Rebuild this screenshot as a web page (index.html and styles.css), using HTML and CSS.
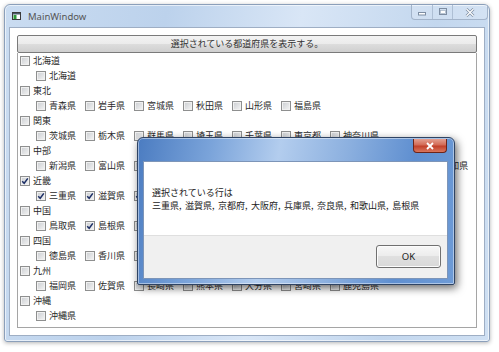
FILE: index.html
```html
<!DOCTYPE html>
<html lang="ja">

<head>
    <meta charset="UTF-8">
    <title>MainWindow</title>
    <link rel="stylesheet" href="styles.css">
</head>

<body>
    <div class="window">
        <div class="titlebar">
            <svg class="app-icon" width="9" height="8" viewBox="0 0 9 8">
                <rect x="0.5" y="0.5" width="8" height="7" fill="#fff" stroke="#3a3a3a" />
                <rect x="1" y="1" width="7" height="1.5" fill="#4a5a6a" />
                <rect x="1.5" y="3" width="3" height="4" fill="#2f9a3a" />
            </svg>
            <span class="title">MainWindow</span>
            <div class="caption">
                <span class="cap cap-min">
                    <svg width="10" height="8" viewBox="0 0 10 8"><rect x="1.5" y="4.5" width="7" height="2.5" fill="#fff" stroke="#7d8da2" /></svg>
                </span>
                <span class="cap cap-max">
                    <svg width="10" height="8" viewBox="0 0 10 8"><rect x="1.5" y="0.5" width="7" height="6" fill="none" stroke="#7d8da2" /><rect x="2.5" y="2.5" width="5" height="3" fill="#fff" stroke="#9aa8ba" stroke-width="0.6" /></svg>
                </span>
                <span class="cap cap-close">
                    <svg width="10" height="9" viewBox="0 0 10 9"><path d="M1.5 1 L8.5 8 M8.5 1 L1.5 8" stroke="#7d8da2" stroke-width="2.6" /><path d="M1.5 1 L8.5 8 M8.5 1 L1.5 8" stroke="#fff" stroke-width="1.2" /></svg>
                </span>
            </div>
        </div>

        <div class="client">
            <div class="show-button">選択されている都道府県を表示する。</div>

            <div class="tree">
                <div class="row"><span class="item"><span class="box"></span>北海道</span></div>
                <div class="row child"><span class="item"><span class="box"></span>北海道</span></div>

                <div class="row"><span class="item"><span class="box"></span>東北</span></div>
                <div class="row child">
                    <span class="item"><span class="box"></span>青森県</span>
                    <span class="item"><span class="box"></span>岩手県</span>
                    <span class="item"><span class="box"></span>宮城県</span>
                    <span class="item"><span class="box"></span>秋田県</span>
                    <span class="item"><span class="box"></span>山形県</span>
                    <span class="item"><span class="box"></span>福島県</span>
                </div>

                <div class="row"><span class="item"><span class="box"></span>関東</span></div>
                <div class="row child">
                    <span class="item"><span class="box"></span>茨城県</span>
                    <span class="item"><span class="box"></span>栃木県</span>
                    <span class="item"><span class="box"></span>群馬県</span>
                    <span class="item"><span class="box"></span>埼玉県</span>
                    <span class="item"><span class="box"></span>千葉県</span>
                    <span class="item"><span class="box"></span>東京都</span>
                    <span class="item"><span class="box"></span>神奈川県</span>
                </div>

                <div class="row"><span class="item"><span class="box"></span>中部</span></div>
                <div class="row child">
                    <span class="item"><span class="box"></span>新潟県</span>
                    <span class="item"><span class="box"></span>富山県</span>
                    <span class="item"><span class="box"></span>石川県</span>
                    <span class="item"><span class="box"></span>福井県</span>
                    <span class="item"><span class="box"></span>山梨県</span>
                    <span class="item"><span class="box"></span>長野県</span>
                    <span class="item"><span class="box"></span>岐阜県</span>
                    <span class="item"><span class="box"></span>静岡県</span>
                    <span class="item"><span class="box"></span>愛知県</span>
                </div>

                <div class="row"><span class="item"><span class="box checked"></span>近畿</span></div>
                <div class="row child">
                    <span class="item"><span class="box checked"></span>三重県</span>
                    <span class="item"><span class="box checked"></span>滋賀県</span>
                    <span class="item"><span class="box checked"></span>京都府</span>
                    <span class="item"><span class="box checked"></span>大阪府</span>
                    <span class="item"><span class="box checked"></span>兵庫県</span>
                    <span class="item"><span class="box checked"></span>奈良県</span>
                    <span class="item"><span class="box checked"></span>和歌山県</span>
                </div>

                <div class="row"><span class="item"><span class="box"></span>中国</span></div>
                <div class="row child">
                    <span class="item"><span class="box"></span>鳥取県</span>
                    <span class="item"><span class="box checked"></span>島根県</span>
                    <span class="item"><span class="box"></span>岡山県</span>
                    <span class="item"><span class="box"></span>広島県</span>
                    <span class="item"><span class="box"></span>山口県</span>
                </div>

                <div class="row"><span class="item"><span class="box"></span>四国</span></div>
                <div class="row child">
                    <span class="item"><span class="box"></span>徳島県</span>
                    <span class="item"><span class="box"></span>香川県</span>
                    <span class="item"><span class="box"></span>愛媛県</span>
                    <span class="item"><span class="box"></span>高知県</span>
                </div>

                <div class="row"><span class="item"><span class="box"></span>九州</span></div>
                <div class="row child">
                    <span class="item"><span class="box"></span>福岡県</span>
                    <span class="item"><span class="box"></span>佐賀県</span>
                    <span class="item"><span class="box"></span>長崎県</span>
                    <span class="item"><span class="box"></span>熊本県</span>
                    <span class="item"><span class="box"></span>大分県</span>
                    <span class="item"><span class="box"></span>宮崎県</span>
                    <span class="item"><span class="box"></span>鹿児島県</span>
                </div>

                <div class="row"><span class="item"><span class="box"></span>沖縄</span></div>
                <div class="row child"><span class="item"><span class="box"></span>沖縄県</span></div>
            </div>
        </div>
    </div>

    <!-- message box over the main window -->
    <div class="dialog">
        <div class="dialog-title">
            <span class="close">
                <svg width="10" height="8" viewBox="0 0 10 8"><path d="M2 1 L8 7 M8 1 L2 7" stroke="#fff" stroke-width="1.8" /></svg>
            </span>
        </div>
        <div class="dialog-client">
            <div class="message">
                <div>選択されている行は</div>
                <div class="list">三重県, 滋賀県, 京都府, 大阪府, 兵庫県, 奈良県, 和歌山県, 島根県</div>
            </div>
            <div class="footer">
                <div class="ok">OK</div>
            </div>
        </div>
    </div>

    <script>
        // tick marks for the checked boxes
        document.querySelectorAll('.box.checked').forEach(b => {
            b.innerHTML = '<svg width="8" height="8" viewBox="0 0 8 8"><path d="M1.2 4.2 L3.2 6.3 L6.8 1.4" fill="none" stroke="#1d2f66" stroke-width="1.5" /></svg>';
        });
    </script>
</body>

</html>
```

FILE: styles.css
```css
* {
    box-sizing: border-box;
}

body {
    margin: 0;
    height: 352px;
    overflow: hidden;
    position: relative;
    background: #fff;
    font-family: "Noto Sans CJK JP", sans-serif;
    font-size: 9px;
    color: #2a2a2a;
}

.window {
    margin: 4px 0 0 4px;
    width: 486px;
    height: 338px;
    padding: 0 4px 5px;
    display: flex;
    flex-direction: column;
    border: 1px solid #8b9fba;
    border-radius: 6px 6px 3px 3px;
    background: linear-gradient(100deg, #cadcf1 0%, #bcd2ec 30%, #d9e6f6 55%, #c3d7ee 80%, #cfe0f3 100%);
    box-shadow: inset 0 0 0 1px rgba(255, 255, 255, 0.6), 0 1px 4px rgba(0, 0, 0, 0.3);
}

.titlebar {
    height: 22px;
    display: flex;
    align-items: center;
    position: relative;
}

.app-icon {
    margin: 0 7px 0 3px;
}

.title {
    font-family: "Noto Sans", sans-serif;
    font-size: 9.5px;
    color: #555;
}

.caption {
    position: absolute;
    top: 0;
    right: -3px;
    height: 15px;
    display: flex;
    border: 1px solid #a3b4ca;
    border-top: none;
    border-radius: 0 0 4px 4px;
    overflow: hidden;
    background: rgba(255, 255, 255, 0.2);
}

.cap {
    display: flex;
    align-items: center;
    justify-content: center;
    width: 20px;
    border-left: 1px solid #aebfd4;
}

.cap:first-child {
    border-left: none;
}

.cap-close {
    width: 35px;
}

.client {
    flex: 1;
    display: flex;
    flex-direction: column;
    padding: 7px;
    background: #fff;
    border: 1px solid #9eaec4;
}

.show-button {
    height: 18px;
    line-height: 16px;
    text-align: center;
    color: #333;
    border: 1px solid #7a7a7a;
    border-radius: 2px;
    background: linear-gradient(#f3f3f3 0%, #ebebeb 50%, #dddddd 50%, #cfcfcf 100%);
}

.tree {
    flex: 1;
    padding: 0 1px;
    border: 1px solid #a5a5a5;
    border-top: none;
    overflow: hidden;
}

.row {
    height: 15px;
    display: flex;
    align-items: center;
    padding-left: 1px;
    white-space: nowrap;
}

.row.child {
    padding-left: 17px;
}

.item {
    display: flex;
    align-items: center;
    margin-right: 9px;
}

.box {
    width: 10px;
    height: 10px;
    flex: none;
    margin-right: 3px;
    display: flex;
    align-items: center;
    justify-content: center;
    border: 1px solid #8e8f8f;
    background: linear-gradient(135deg, #c9ccd0, #f5f5f5);
    box-shadow: inset 0 0 0 1px #f0f0f0;
}

.dialog {
    position: absolute;
    left: 137px;
    top: 137px;
    width: 318px;
    height: 148px;
    padding: 0 6px 5px 5px;
    display: flex;
    flex-direction: column;
    border: 1px solid #2f4464;
    border-radius: 6px 6px 2px 2px;
    background: linear-gradient(100deg, #4b7cc1 0%, #7ba4da 22%, #b3cdee 42%, #8cb0df 62%, #5f8fd0 82%, #6e9bd6 100%);
    box-shadow: inset 0 0 0 1px rgba(255, 255, 255, 0.45), 2px 3px 9px rgba(0, 0, 0, 0.6);
}

.dialog-title {
    height: 23px;
    position: relative;
}

.close {
    position: absolute;
    top: 1px;
    right: 1px;
    width: 34px;
    height: 14px;
    display: flex;
    align-items: center;
    justify-content: center;
    border: 1px solid #6e2418;
    border-top: none;
    border-radius: 0 0 4px 4px;
    background: linear-gradient(#e4a091 0%, #d36b56 45%, #c2402a 55%, #d9775e 100%);
}

.dialog-client {
    flex: 1;
    display: flex;
    flex-direction: column;
    background: #fff;
    border: 1px solid #7d95b8;
}

.message {
    flex: 1;
    padding: 24px 8px 0;
    line-height: 13px;
    color: #222;
}

.list {
    word-spacing: 1.5px;
}

.footer {
    height: 43px;
    display: flex;
    justify-content: flex-end;
    padding: 9px 6px 0 0;
    background: #f0f0f0;
    border-top: 1px solid #dfdfdf;
}

.ok {
    width: 65px;
    height: 23px;
    line-height: 21px;
    text-align: center;
    font-family: "Noto Sans", sans-serif;
    font-size: 9.5px;
    color: #222;
    border: 1px solid #707070;
    border-radius: 3px;
    background: linear-gradient(#f7f7f7 0%, #ececec 50%, #e0e0e0 50%, #d8d8d8 100%);
    box-shadow: inset 0 0 0 1px #fcfcfc;
}
```
